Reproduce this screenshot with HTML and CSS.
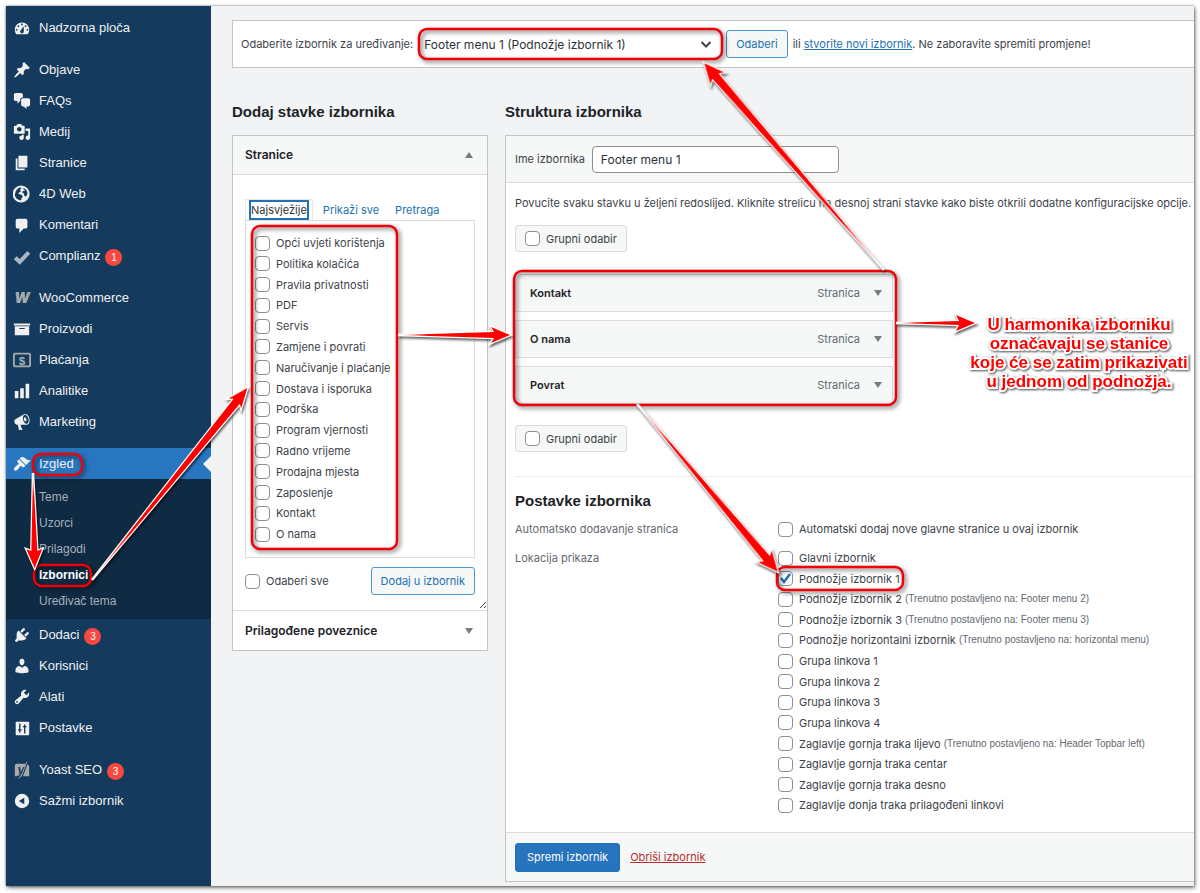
FILE: index.html
```
<!DOCTYPE html>
<html lang="hr">
<head>
    <meta charset="UTF-8">
    <meta name="viewport" content="width=device-width, initial-scale=1.0">
    <title>Izbornici</title>
    <link rel="stylesheet" href="styles.css">
</head>
<body>
    <div class="screen">
        <!-- Admin menu -->
        <nav class="sidebar">
            <ul class="menu">
                <li><a href="#"><svg class="icon" viewBox="0 0 20 20"><path fill-rule="evenodd" d="M3.76 17h12.48c1.1-1.37 1.76-3.11 1.76-5 0-4.42-3.58-8-8-8s-8 3.58-8 8c0 1.89.66 3.63 1.76 5zM10 5a1 1 0 1 1 0 2 1 1 0 0 1 0-2zM6 7a1 1 0 1 1 0 2 1 1 0 0 1 0-2zm8 0a1 1 0 1 1 0 2 1 1 0 0 1 0-2zm-5.37 5.55L12 8v6c0 1.1-.9 2-2 2s-2-.9-2-2c0-.57.24-1.08.63-1.45zM4 11a1 1 0 1 1 0 2 1 1 0 0 1 0-2zm12 0a1 1 0 1 1 0 2 1 1 0 0 1 0-2z"/></svg>Nadzorna ploča</a></li>
                <li class="group"><a href="#"><svg class="icon" viewBox="0 0 20 20"><path d="M10.44 3.02l1.82-1.82 6.36 6.35-1.83 1.82c-1.05-.68-2.48-.57-3.41.36l-.75.75c-.92.93-1.04 2.35-.35 3.41l-1.83 1.82-2.41-2.41-2.8 2.79c-.42.42-3.38 2.71-3.8 2.29s1.86-3.39 2.28-3.81l2.79-2.79L4.1 9.36l1.83-1.82c1.05.69 2.48.57 3.4-.36l.75-.75c.93-.92 1.05-2.35.36-3.41z"/></svg>Objave</a></li>
                <li><a href="#"><svg class="icon" viewBox="0 0 20 20"><path d="M11 6h-.82C9.07 6 8 7.2 8 8.16V10l-3 3v-3H3c-1.1 0-2-.9-2-2V3c0-1.1.9-2 2-2h6c1.1 0 2 .9 2 2v3zm0 1h6c1.1 0 2 .9 2 2v5c0 1.1-.9 2-2 2h-2v3l-3-3h-1c-1.1 0-2-.9-2-2V9c0-1.1.9-2 2-2z"/></svg>FAQs</a></li>
                <li><a href="#"><svg class="icon" viewBox="0 0 20 20"><path fill-rule="evenodd" d="M13 11V4c0-.55-.45-1-1-1h-1.67L9 1H5L3.67 3H2c-.55 0-1 .45-1 1v7c0 .55.45 1 1 1h10c.55 0 1-.45 1-1zM7 4.5c1.38 0 2.5 1.12 2.5 2.5S8.38 9.5 7 9.5 4.5 8.38 4.5 7 5.62 4.5 7 4.5zM14 6h5v10.5c0 1.38-1.12 2.5-2.5 2.5S14 17.88 14 16.5s1.12-2.5 2.5-2.5c.17 0 .34.02.5.05V9h-3V6zm-4 8.05V13h2v3.5c0 1.38-1.12 2.5-2.5 2.5S7 17.88 7 16.5 8.12 14 9.5 14c.17 0 .34.02.5.05z"/></svg>Medij</a></li>
                <li><a href="#"><svg class="icon" viewBox="0 0 20 20"><path d="M6 15V2h10v13H6zm-1 1h8v2H3V5h2v11z"/></svg>Stranice</a></li>
                <li><a href="#"><svg class="icon" viewBox="0 0 20 20"><circle cx="9" cy="10" r="9.5"/><path class="cut" d="M3 7.500C4 4.500 6 3 8.500 2.800L9.500 4 7.500 5.500 9 7 6.500 8.500 6 10l3 .5 2 2-1.500 2.500L9 17C5 16.800 2.200 14 2 10.500zM11 3.200c3 .8 5 3 5.200 6.300l-1.700 3.500-2-1-.5-2.500L10 8l1.500-1.500 2 .5L12 5z"/></svg>4D Web</a></li>
                <li><a href="#"><svg class="icon" viewBox="0 0 20 20"><path d="M5 3h9c1.100 0 2 .9 2 2v7c0 1.100-.9 2-2 2h-2l-5 5v-5H5c-1.100 0-2-.9-2-2V5c0-1.100.9-2 2-2z"/></svg>Komentari</a></li>
                <li><a href="#"><svg class="icon" viewBox="0 0 20 20"><path class="line faded" d="M2.500 12l5 4.500L17.500 6" stroke-width="4.500"/></svg>Complianz <span class="count">1</span></a></li>
                <li class="group"><a href="#"><svg class="icon" viewBox="0 0 20 20"><text class="gray woo" x="10" y="16" text-anchor="middle">W</text></svg>WooCommerce</a></li>
                <li><a href="#"><svg class="icon" viewBox="0 0 20 20"><path fill-rule="evenodd" d="M19 4v2H1V4h18zM2 7h16v10H2V7zm11 3V9H7v1h6z"/></svg>Proizvodi</a></li>
                <li><a href="#"><svg class="icon" viewBox="0 0 20 20"><rect class="frame" x="1" y="3" width="18" height="14" rx="1"/><text class="gray dollar" x="10" y="15" text-anchor="middle">$</text></svg>Plaćanja</a></li>
                <li><a href="#"><svg class="icon" viewBox="0 0 20 20"><path d="M18 18V2h-4v16h4zm-6 0V7H8v11h4zm-6 0v-8H2v8h4z"/></svg>Analitike</a></li>
                <li><a href="#"><svg class="icon" viewBox="0 0 20 20"><path fill-rule="evenodd" d="M18.150 5.940c.46 1.620.38 3.220-.02 4.480-.42 1.280-1.260 2.180-2.300 2.480-.16.06-.26.06-.4.06-.06.02-.12.02-.18.02-.06.02-.14.02-.22.02h-6.800l2.220 5.500c.02.14-.06.26-.14.34-.08.1-.24.16-.34.16H6.950c-.1 0-.26-.06-.34-.16-.08-.08-.16-.2-.14-.34l-1-5.500H4.250l-.02-.02c-.5.06-1.080-.18-1.540-.62s-.88-1.080-1.060-1.880c-.24-.8-.2-1.560-.02-2.200.18-.62.58-1.080 1.060-1.300l.02-.02 9-5.400c.1-.06.18-.1.24-.16.06-.04.14-.08.24-.12.16-.08.28-.12.5-.18 1.040-.3 2.240.1 3.220.98s1.840 2.240 2.260 3.860zm-2.580 5.980h-.02c.4-.1.74-.34 1.040-.7.58-.7.86-1.760.86-3.040 0-.64-.1-1.300-.28-1.980-.34-1.360-1.020-2.500-1.780-3.240s-1.680-1.100-2.460-.88c-.82.22-1.400.96-1.700 2-.32 1.040-.28 2.360.06 3.720.38 1.360 1 2.500 1.800 3.240.78.74 1.620 1.100 2.480.88zm-2.540-7.080c.22-.04.42-.02.62.04.38.16.76.48 1.020 1s.42 1.200.42 1.780c0 .3-.04.56-.12.8-.18.48-.44.84-.86.94-.34.1-.8-.06-1.140-.4s-.64-.86-.78-1.500c-.18-.62-.12-1.240.02-1.720s.48-.84.82-.94z"/></svg>Marketing</a></li>
                <li class="group current"><a href="#"><svg class="icon" viewBox="0 0 20 20"><path d="M14.480 11.060L7.410 3.990l1.500-1.500c.5-.56 2.300-.47 3.510.32 1.210.8 1.430 1.280 2.910 2.100 1.180.64 2.450 1.260 4.450.85zm-.71.71L6.700 4.700 4.930 6.470c-.39.39-.39 1.020 0 1.410l1.060 1.060c.39.39.39 1.030 0 1.420-.6.6-1.430 1.110-2.210 1.690-.35.26-.7.53-1.010.84C1.430 14.230.4 16.080 1.400 17.070c.99 1 2.840-.03 4.180-1.360.31-.31.58-.66.85-1.020.57-.78 1.080-1.610 1.690-2.210.39-.39 1.020-.39 1.410 0l1.060 1.060c.39.39 1.020.39 1.410 0z"/></svg>Izgled</a>
                    <ul class="submenu">
                        <li><a href="#">Teme</a></li>
                        <li><a href="#">Uzorci</a></li>
                        <li><a href="#">Prilagodi</a></li>
                        <li><a href="#" class="selected">Izbornici</a></li>
                        <li><a href="#">Uređivač tema</a></li>
                    </ul>
                </li>
                <li><a href="#"><svg class="icon" viewBox="0 0 20 20"><path d="M13.110 4.360L9.870 7.600 8 5.730l3.240-3.240c.35-.34 1.050-.2 1.560.32.52.51.66 1.210.31 1.550zm-8 1.770l.91-1.120 9.010 9.010-1.190.84c-.71.71-2.630 1.160-3.820 1.160H6.140L4.900 17.260c-.59.59-1.540.59-2.120 0-.59-.58-.59-1.530 0-2.120l1.240-1.240v-3.880c0-1.130.4-3.190 1.090-3.890zm7.260 3.970l3.240-3.240c.34-.35 1.040-.21 1.550.31.52.51.66 1.210.31 1.550l-3.240 3.250z"/></svg>Dodaci <span class="count">3</span></a></li>
                <li><a href="#"><svg class="icon" viewBox="0 0 20 20"><path d="M10 9.250c-2.270 0-2.730-3.440-2.730-3.440C7 4.020 7.820 2 9.970 2c2.160 0 2.980 2.020 2.710 3.810 0 0-.41 3.440-2.680 3.440zm0 2.570L12.720 10c2.390 0 4.520 2.330 4.520 4.530v2.490s-3.650 1.130-7.240 1.130c-3.650 0-7.240-1.130-7.240-1.130v-2.490c0-2.250 1.940-4.480 4.470-4.480z"/></svg>Korisnici</a></li>
                <li><a href="#"><svg class="icon" viewBox="0 0 20 20"><path fill-rule="evenodd" d="M16.680 9.770c-1.340 1.340-3.300 1.670-4.950.99l-5.410 6.520c-.99.99-2.590.99-3.580 0s-.99-2.590 0-3.570l6.520-5.420c-.68-1.650-.35-3.610.99-4.950 1.280-1.280 3.120-1.620 4.720-1.060l-2.890 2.890 2.820 2.820 2.860-2.870c.53 1.580.18 3.390-1.080 4.650zM3.810 16.210c.4.39 1.040.39 1.430 0 .4-.4.4-1.040 0-1.430-.39-.4-1.030-.4-1.430 0-.39.39-.39 1.030 0 1.430z"/></svg>Alati</a></li>
                <li><a href="#"><svg class="icon" viewBox="0 0 20 20"><rect x="3" y="3" width="15" height="15" rx="1"/><path class="cutline" d="M7.500 5v10M5.500 12h4M13 6v10M11 8.500h4" stroke-width="1.500"/></svg>Postavke</a></li>
                <li class="group"><a href="#"><svg class="icon" viewBox="0 0 20 20"><path class="gray" d="M4.500 3H14l-5 14H2V5.500A2.500 2.500 0 0 1 4.500 3zM16 4q2 .5 2 2.500V17h-7z"/><text class="yoast" x="9" y="14" text-anchor="middle">y</text><path class="gray thin" d="M15.500 1L9.500 16Q8.500 18.500 6 19"/></svg>Yoast SEO <span class="count">3</span></a></li>
                <li><a href="#"><svg class="icon" viewBox="0 0 20 20"><path fill-rule="evenodd" d="M10 2a8 8 0 1 1 0 16 8 8 0 0 1 0-16zM12.500 6.500v7L6.500 10z"/></svg>Sažmi izbornik</a></li>
            </ul>
        </nav>

        <main class="content">
            <!-- Menu picker -->
            <form class="manage">
                <label for="menu-select">Odaberite izbornik za uređivanje:</label>
                <select id="menu-select" class="menu-select">
                    <option>Footer menu 1 (Podnožje izbornik 1)</option>
                </select>
                <button type="button" class="button">Odaberi</button>
                <span>ili <a href="#">stvorite novi izbornik</a>. Ne zaboravite spremiti promjene!</span>
            </form>

            <div class="columns">
                <!-- Items that can be added -->
                <section class="add-items">
                    <h2>Dodaj stavke izbornika</h2>
                    <div class="box">
                        <div class="box-title open"><h3>Stranice</h3><span class="arrow up"></span></div>
                        <div class="box-body">
                            <div class="tabs">
                                <a href="#" class="tab active"><span class="focus">Najsvježije</span></a>
                                <a href="#" class="tab">Prikaži sve</a>
                                <a href="#" class="tab">Pretraga</a>
                            </div>
                            <div class="tab-panel">
                                <ul class="pages">
                                    <li><label><input type="checkbox">Opći uvjeti korištenja</label></li>
                                    <li><label><input type="checkbox">Politika kolačića</label></li>
                                    <li><label><input type="checkbox">Pravila privatnosti</label></li>
                                    <li><label><input type="checkbox">PDF</label></li>
                                    <li><label><input type="checkbox">Servis</label></li>
                                    <li><label><input type="checkbox">Zamjene i povrati</label></li>
                                    <li><label><input type="checkbox">Naručivanje i plaćanje</label></li>
                                    <li><label><input type="checkbox">Dostava i isporuka</label></li>
                                    <li><label><input type="checkbox">Podrška</label></li>
                                    <li><label><input type="checkbox">Program vjernosti</label></li>
                                    <li><label><input type="checkbox">Radno vrijeme</label></li>
                                    <li><label><input type="checkbox">Prodajna mjesta</label></li>
                                    <li><label><input type="checkbox">Zaposlenje</label></li>
                                    <li><label><input type="checkbox">Kontakt</label></li>
                                    <li><label><input type="checkbox">O nama</label></li>
                                </ul>
                            </div>
                            <div class="box-actions">
                                <label><input type="checkbox">Odaberi sve</label>
                                <button type="button" class="button">Dodaj u izbornik</button>
                            </div>
                            <svg class="grip" viewBox="0 0 8 8"><path d="M1 7l6-6M5 7l2-2"/></svg>
                        </div>
                        <div class="box-title"><h3>Prilagođene poveznice</h3><span class="arrow"></span></div>
                    </div>
                </section>

                <!-- Menu structure -->
                <section class="structure">
                    <h2>Struktura izbornika</h2>
                    <form class="box menu-edit">
                        <div class="edit-header">
                            <label for="menu-name">Ime izbornika</label>
                            <input type="text" id="menu-name" class="menu-name" value="Footer menu 1">
                        </div>
                        <div class="edit-body">
                            <p class="hint">Povucite svaku stavku u željeni redoslijed. Kliknite strelicu na desnoj strani stavke kako biste otkrili dodatne konfiguracijske opcije.</p>
                            <label class="bulk"><input type="checkbox">Grupni odabir</label>
                            <ul class="items">
                                <li><strong>Kontakt</strong><span class="type">Stranica</span><span class="arrow"></span></li>
                                <li><strong>O nama</strong><span class="type">Stranica</span><span class="arrow"></span></li>
                                <li><strong>Povrat</strong><span class="type">Stranica</span><span class="arrow"></span></li>
                            </ul>
                            <label class="bulk"><input type="checkbox">Grupni odabir</label>
                            <div class="settings">
                                <h2>Postavke izbornika</h2>
                                <div class="setting">
                                    <span class="legend">Automatsko dodavanje stranica</span>
                                    <label><input type="checkbox">Automatski dodaj nove glavne stranice u ovaj izbornik</label>
                                </div>
                                <div class="setting">
                                    <span class="legend">Lokacija prikaza</span>
                                    <ul class="locations">
                                        <li><label><input type="checkbox">Glavni izbornik</label></li>
                                        <li><label><input type="checkbox" checked>Podnožje izbornik 1</label></li>
                                        <li><label><input type="checkbox">Podnožje izbornik 2 <small>(Trenutno postavljeno na: Footer menu 2)</small></label></li>
                                        <li><label><input type="checkbox">Podnožje izbornik 3 <small>(Trenutno postavljeno na: Footer menu 3)</small></label></li>
                                        <li><label><input type="checkbox">Podnožje horizontalni izbornik <small>(Trenutno postavljeno na: horizontal menu)</small></label></li>
                                        <li><label><input type="checkbox">Grupa linkova 1</label></li>
                                        <li><label><input type="checkbox">Grupa linkova 2</label></li>
                                        <li><label><input type="checkbox">Grupa linkova 3</label></li>
                                        <li><label><input type="checkbox">Grupa linkova 4</label></li>
                                        <li><label><input type="checkbox">Zaglavlje gornja traka lijevo <small>(Trenutno postavljeno na: Header Topbar left)</small></label></li>
                                        <li><label><input type="checkbox">Zaglavlje gornja traka centar</label></li>
                                        <li><label><input type="checkbox">Zaglavlje gornja traka desno</label></li>
                                        <li><label><input type="checkbox">Zaglavlje donja traka prilagođeni linkovi</label></li>
                                    </ul>
                                </div>
                            </div>
                        </div>
                        <div class="edit-footer">
                            <button type="button" class="button primary">Spremi izbornik</button>
                            <a href="#" class="delete">Obriši izbornik</a>
                        </div>
                    </form>
                </section>
            </div>
        </main>
    </div>

    <!-- Tutorial marks over the screen -->
    <svg class="marks" width="1200" height="893" viewBox="0 0 1200 893">
        <defs>
            <linearGradient id="fade">
                <stop offset="0" stop-color="#fff"/>
                <stop offset="0.25" stop-color="#f00"/>
            </linearGradient>
        </defs>
        <g class="frames">
            <rect x="33" y="454" width="49" height="21" rx="8"/>
            <rect x="34" y="565" width="57" height="21" rx="8"/>
            <rect x="252" y="226" width="145" height="323" rx="8"/>
            <rect x="419" y="29" width="303" height="30" rx="8"/>
            <rect x="514" y="271" width="382" height="134" rx="8"/>
            <rect x="777" y="567" width="126" height="23" rx="8"/>
        </g>
        <g class="arrows">
            <path transform="translate(33 473) rotate(89)" d="M0 0L78-3 76-8 95 0 76 8 78 3z"/>
            <path transform="translate(92 580) rotate(-51)" d="M0 0L230-4 227-8 247 0 227 8 230 4z"/>
            <path transform="translate(398 335)" d="M0 0L96-3 93-8 112 0 93 8 96 3z"/>
            <path transform="translate(884 270) rotate(-131)" d="M0 0L257-4 254-9 274 0 254 9 257 4z"/>
            <path transform="translate(637 404) rotate(50)" d="M0 0L202-4 199-9 219 0 199 9 202 4z"/>
            <path transform="translate(896 323)" d="M0 0L63-2 60-8 79 0 60 8 63 2z"/>
        </g>
    </svg>
    <p class="note">U harmonika izborniku<br>označavaju se stanice<br>koje će se zatim prikazivati<br>u jednom od podnožja.</p>
</body>
</html>
```
FILE: styles.css
```
* {
    box-sizing: border-box;
}
body {
    position: relative;
    margin: 0;
    padding: 6px;
    min-height: 100vh;
    background-color: #fff;
    color: #3c434a;
    font-family: "Liberation Sans", Arial, sans-serif;
    font-size: 12px;
    line-height: 16px;
    overflow-x: hidden;
}
ul {
    list-style-type: none;
    margin: 0;
    padding: 0;
}
h2, h3, p {
    margin: 0;
}
h2 {
    color: #1d2327;
    font-family: "Liberation Sans", Arial, sans-serif;
    font-size: 15px;
    line-height: 20px;
}
h3 {
    color: #1d2327;
    font-size: 12px;
    font-weight: 600;
}
a {
    color: #2271b1;
}
.screen {
    display: flex;
    background-color: #f1f3f5;
    box-shadow: 0 0 2px rgba(0, 0, 0, 0.5), 1px 2px 4px rgba(0, 0, 0, 0.5);
    overflow: hidden;
}

/* Sidebar */
.sidebar {
    flex: none;
    width: 205px;
    padding-top: 6px;
    background-color: #143b5e;
    font-size: 13px;
}
.menu a {
    display: flex;
    align-items: center;
    height: 31px;
    padding-left: 7px;
    color: #f0f0f1;
    text-decoration: none;
}
.menu .group {
    margin-top: 11px;
}
.icon {
    width: 18px;
    height: 18px;
    margin-right: 8px;
    fill: #f0f0f1;
}
.icon .gray {
    fill: #a7aaad;
}
.icon .cut {
    fill: #143b5e;
}
.icon .line {
    fill: none;
    stroke: #f0f0f1;
}
.icon .faded {
    stroke: #a9b6c2;
}
.icon .cutline {
    fill: none;
    stroke: #143b5e;
}
.icon .frame {
    fill: none;
    stroke: #a7aaad;
    stroke-width: 2;
}
.icon .thin {
    fill: none;
    stroke: #a7aaad;
}
.icon .woo {
    font: italic 900 16px Inter, sans-serif;
}
.icon .dollar {
    font: bold 13px "Liberation Sans", sans-serif;
}
.icon .yoast {
    font: italic bold 14px "Liberation Sans", sans-serif;
    fill: #143b5e;
}
.count {
    width: 17px;
    height: 17px;
    margin: 3px 0 0 5px;
    border-radius: 9px;
    background-color: #f9483f;
    color: #fff;
    font-size: 10px;
    line-height: 17px;
    text-align: center;
}
.current > a {
    position: relative;
    background-color: #2776bf;
}
.current > a::after {
    content: "";
    position: absolute;
    right: 0;
    top: 8px;
    border: 8px solid transparent;
    border-left-width: 0;
    border-right-color: #f1f3f5;
}
.submenu {
    padding: 5px 0;
    background-color: #0f2a43;
    font-size: 12px;
}
.submenu a {
    height: 26px;
    padding-left: 33px;
    color: #a3afbb;
}
.submenu .selected {
    color: #fff;
    font-weight: bold;
}

/* Controls */
input[type="checkbox"] {
    appearance: none;
    flex: none;
    width: 15px;
    height: 15px;
    margin: 0 6px 0 0;
    border: 1px solid #8c8f94;
    border-radius: 4px;
    background: #fff center / 13px no-repeat;
}
input[type="checkbox"]:checked {
    background-image: url("data:image/svg+xml,%3Csvg xmlns='http://www.w3.org/2000/svg' viewBox='0 0 13 13'%3E%3Cpath d='M2 6l3 4 6-8' fill='none' stroke='%232271b1' stroke-width='2.500'/%3E%3C/svg%3E");
}
label {
    display: flex;
    align-items: center;
}
.button {
    height: 28px;
    padding: 0 9px;
    border: 1px solid #4f94d4;
    border-radius: 3px;
    background-color: #f6f7f7;
    color: #2271b1;
    font: inherit;
    white-space: nowrap;
}
.primary {
    height: 29px;
    padding: 0 11px;
    border-color: #2271b1;
    background-color: #2674bd;
    color: #fff;
}
.arrow {
    border: 4px solid transparent;
    border-top: 6px solid #787c82;
    border-bottom-width: 0;
}
.arrow.up {
    border-top-width: 0;
    border-bottom: 6px solid #787c82;
}
.box-title .arrow {
    margin-right: 2px;
}

/* Content */
.content {
    flex: 1;
    min-width: 0;
    padding: 14px 0 4px 21px;
    font-family: Inter, Arial, sans-serif;
    font-size: 11px;
}
.manage {
    display: flex;
    align-items: center;
    gap: 5px;
    height: 48px;
    padding-left: 8px;
    border: 1px solid #c3c4c7;
    border-right: 0;
    background-color: #fff;
    white-space: nowrap;
}
.menu-select {
    appearance: none;
    width: 300px;
    height: 28px;
    margin-right: 3px;
    padding: 0 6px;
    border: 0;
    background: #fff url("data:image/svg+xml,%3Csvg xmlns='http://www.w3.org/2000/svg' viewBox='0 0 12 12'%3E%3Cpath d='M1.500 4L6 8.500 10.500 4' fill='none' stroke='%233c434a' stroke-width='2'/%3E%3C/svg%3E") right 6px center / 12px no-repeat;
    color: #2c3338;
    font-family: inherit;
    font-size: 12px;
}
.columns {
    display: flex;
    align-items: flex-start;
    gap: 17px;
    margin-top: 34px;
}
.columns section > h2 {
    margin-bottom: 13px;
}
.add-items {
    flex: none;
    width: 256px;
}
.structure {
    flex: 1;
    min-width: 0;
}
.box {
    border: 1px solid #c3c4c7;
    background-color: #fff;
}
.box-title {
    display: flex;
    align-items: center;
    justify-content: space-between;
    height: 39px;
    padding: 0 12px;
}
.box-title.open {
    border-bottom: 1px solid #dcdcde;
    background-color: #f6f7f7;
}
.box-body {
    position: relative;
    padding: 24px 12px 6px;
    border-bottom: 1px solid #dcdcde;
}
.tabs {
    display: flex;
    align-items: flex-end;
}
.tab {
    padding: 2px 6px;
    text-decoration: none;
}
.tab + .tab {
    margin-left: 4px;
}
.tab.active {
    padding: 2px 5px;
    border: 1px solid #e8e8ea;
    border-bottom: 0;
    color: #2c3338;
}
.focus {
    display: block;
    outline: 2px solid #2271b1;
}
.tab-panel {
    padding: 14px 9px 10px;
    border: 1px solid #dcdcde;
}
.pages {
    display: grid;
    grid-auto-rows: 1fr;
    min-height: 312px;
}
.box-actions {
    display: flex;
    align-items: center;
    justify-content: space-between;
    padding: 9px 0;
}
.grip {
    position: absolute;
    right: 0;
    bottom: 1px;
    width: 8px;
    height: 8px;
    fill: none;
    stroke: #3c434a;
}

/* Menu structure */
.menu-edit {
    border-right: 0;
}
.edit-header {
    display: flex;
    align-items: center;
    gap: 7px;
    height: 47px;
    padding-left: 9px;
    border-bottom: 1px solid #dcdcde;
    background-color: #f6f7f7;
}
.menu-name {
    width: 247px;
    height: 27px;
    padding: 0 8px;
    border: 1px solid #8c8f94;
    border-radius: 4px;
    color: #2c3338;
    font-family: inherit;
    font-size: 12px;
}
.edit-body {
    padding: 12px 0 14px 9px;
}
.hint {
    white-space: nowrap;
}
.bulk {
    width: 112px;
    height: 27px;
    margin-top: 14px;
    padding-left: 9px;
    border: 1px solid #dcdcde;
    border-radius: 3px;
    background-color: #f6f7f7;
}
.items {
    display: grid;
    gap: 8px;
    width: 378px;
    margin: 22px 0 21px;
}
.items li {
    display: flex;
    align-items: center;
    height: 38px;
    padding: 0 10px 0 14px;
    border: 1px solid #dcdcde;
    background-color: #f6f7f7;
}
.items strong {
    flex: 1;
    color: #1d2327;
    font-weight: 600;
}
.items .type {
    margin-right: 14px;
    color: #646970;
}
.settings {
    margin-top: 24px;
    padding-top: 14px;
    border-top: 1px solid #eee;
}
.setting {
    display: grid;
    grid-template-columns: 257px 1fr;
    column-gap: 6px;
    margin-top: 10px;
    white-space: nowrap;
}
.setting + .setting {
    margin-top: 13px;
}
.setting .legend {
    color: #646970;
}
.locations {
    display: grid;
    grid-auto-rows: 1fr;
    min-height: 268px;
}
small {
    margin-left: 3px;
    color: #646970;
    font-family: "Liberation Sans", Arial, sans-serif;
    font-size: 10px;
}
.edit-footer {
    display: flex;
    align-items: center;
    gap: 10px;
    height: 49px;
    padding-left: 9px;
    border-top: 1px solid #dcdcde;
    background-color: #f6f7f7;
}
.delete {
    color: #b32d2e;
}

/* Marks */
.marks {
    position: absolute;
    left: 0;
    top: 0;
    pointer-events: none;
}
.frames {
    fill: none;
    stroke: #f00008;
    stroke-width: 2.5;
    filter: drop-shadow(2px 2px 2px rgba(0, 0, 0, 0.6));
}
.arrows {
    fill: url(#fade);
    stroke: #fff;
    stroke-width: 2.5;
    paint-order: stroke;
    filter: drop-shadow(1px 2px 1px rgba(0, 0, 0, 0.6));
}
.note {
    position: absolute;
    left: 964px;
    top: 315px;
    width: 230px;
    color: #f00;
    font-size: 17px;
    font-weight: bold;
    line-height: 19px;
    text-align: center;
    white-space: nowrap;
    -webkit-text-stroke: 4px #fff;
    paint-order: stroke fill;
    filter: drop-shadow(1px 1px 1px rgba(0, 0, 0, 0.7));
}
```
